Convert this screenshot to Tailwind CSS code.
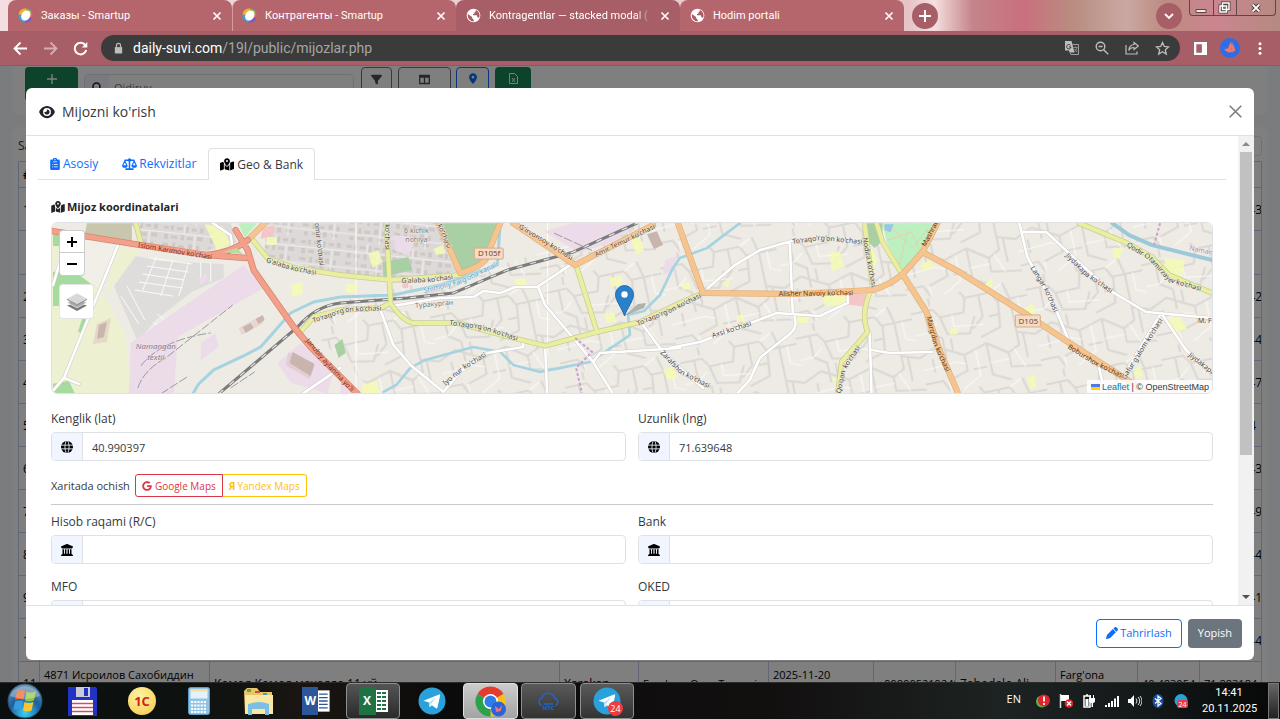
<!DOCTYPE html>
<html lang="uz">
<head>
<meta charset="utf-8">
<meta name="viewport" content="width=device-width, initial-scale=1">
<title>Mijozlar</title>
<script src="https://cdn.jsdelivr.net/npm/@tailwindcss/browser@4"></script>
</head>
<body class="h-screen flex flex-col overflow-hidden bg-black font-['Open_Sans','Noto_Sans',sans-serif] text-[12px] leading-5 text-[#343a40]">

<!-- shared symbols -->
<svg class="hidden" aria-hidden="true">
  <symbol id="eye" viewBox="0 0 576 512"><path d="M288 32c-80.8 0-145.5 36.8-192.6 80.6C48.6 156 17.3 208 2.5 243.7c-3.3 7.9-3.3 16.7 0 24.6C17.3 304 48.6 356 95.4 399.4C142.5 443.2 207.2 480 288 480s145.5-36.8 192.6-80.6c46.8-43.5 78.1-95.4 93-131.1c3.3-7.9 3.3-16.7 0-24.6c-14.9-35.7-46.2-87.7-93-131.1C433.5 68.8 368.8 32 288 32zM144 256a144 144 0 1 1 288 0 144 144 0 1 1 -288 0zm144-64c0 35.3-28.7 64-64 64c-7.1 0-13.9-1.2-20.3-3.3c-5.5-1.8-11.9 1.6-11.7 7.4c.3 6.9 1.3 13.8 3.2 20.7c13.7 51.2 66.4 81.6 117.6 67.9s81.6-66.4 67.9-117.6c-11.1-41.5-47.8-69.4-88.6-71.1c-5.8-.2-9.2 6.1-7.4 11.7c2.1 6.4 3.3 13.2 3.3 20.3z"/></symbol>
  <symbol id="mapdot" viewBox="0 0 576 512"><path d="M408 120c0 54.6-73.1 151.9-105.2 192c-7.7 9.6-22 9.6-29.6 0C241.1 271.9 168 174.6 168 120C168 53.7 221.7 0 288 0s120 53.7 120 120zm8 80.4c3.5-6.9 6.7-13.8 9.6-20.6c.5-1.2 1-2.5 1.5-3.7l116-46.4C558.9 123.4 576 135 576 152V422.8c0 9.8-6 18.6-15.1 22.3L416 503V200.4zM137.6 138.3c2.4 14.1 7.2 28.3 12.8 41.5c2.9 6.8 6.1 13.7 9.6 20.6V451.8L32.9 502.7C17.1 509 0 497.4 0 480.4V209.6c0-9.8 6-18.6 15.1-22.3l122.6-49zM327.8 332c13.9-17.4 35.7-45.7 56.2-77V504.3L192 449.4V255c20.5 31.3 42.3 59.6 56.2 77c20.5 25.6 59.1 25.6 79.6 0zM288 152a40 40 0 1 0 0-80 40 40 0 1 0 0 80z"/></symbol>
  <symbol id="bank" viewBox="0 0 512 512"><path d="M243.4 2.6l-224 96c-14 6-21.8 21-18.7 35.8S16.8 160 32 160v8c0 13.3 10.7 24 24 24H456c13.3 0 24-10.7 24-24v-8c15.2 0 28.3-10.7 31.3-25.6s-4.8-29.9-18.7-35.8l-224-96c-8-3.4-17.2-3.4-25.2 0zM128 224H64V420.3c-.6 .3-1.2 .7-1.8 1.1l-48 32c-11.7 7.8-17 22.4-12.9 35.9S17.9 512 32 512H480c14.1 0 26.5-9.2 30.6-22.7s-1.1-28.1-12.9-35.9l-48-32c-.6-.4-1.2-.7-1.8-1.1V224H384V416H344V224H280V416H232V224H168V416H128V224z"/></symbol>
  <symbol id="globe" viewBox="0 0 24 24"><circle cx="12" cy="12" r="12"/><g fill="none" stroke="#f1f5ff" stroke-width="1.7"><path d="M0 8.3h24M0 15.7h24"/><path d="M12 -2C6.5 4 6.5 20 12 26M12 -2C17.500 4 17.500 20 12 26"/></g></symbol>
  <symbol id="pen" viewBox="0 0 512 512"><path d="M362.7 19.3L314.3 67.7 444.3 197.7l48.400-48.400c25-25 25-65.5 0-90.500L453.3 19.3c-25-25-65.5-25-90.500 0zm-71 71L58.600 323.500c-10.400 10.400-18 23.300-22.200 37.400L1 481.200C-1.500 489.700 .8 498.800 7 505s15.300 8.500 23.700 6.100l120.300-35.400c14.100-4.200 27-11.800 37.400-22.200L421.700 220.300 291.700 90.300z"/></symbol>
  <symbol id="filter" viewBox="0 0 512 512"><path d="M3.900 54.900C10.500 40.900 24.500 32 40 32H472c15.500 0 29.500 8.900 36.100 22.900s4.600 30.500-5.200 42.500L320 320.900V448c0 12.100-6.800 23.200-17.700 28.600s-23.800 4.300-33.500-3l-64-48c-8.100-6-12.800-15.500-12.800-25.600V320.900L9 97.300C-.7 85.400-2.800 68.800 3.900 54.900z"/></symbol>
  <symbol id="pin" viewBox="0 0 384 512"><path d="M215.700 499.200C267 435 384 279.400 384 192C384 86 298 0 192 0S0 86 0 192c0 87.400 117 243 168.300 307.200c12.300 15.300 35.100 15.300 47.400 0zM192 128a64 64 0 1 1 0 128 64 64 0 1 1 0-128z"/></symbol>
  <symbol id="google" viewBox="0 0 488 512"><path d="M488 261.800C488 403.300 391.100 504 248 504 110.800 504 0 393.200 0 256S110.800 8 248 8c66.800 0 123 24.500 166.300 64.900l-67.500 64.900C258.500 52.600 94.300 116.600 94.300 256c0 86.500 69.100 156.600 153.700 156.600 98.200 0 135-70.400 140.800-106.900H248v-85.300h236.100c2.300 12.700 3.900 24.900 3.900 41.400z"/></symbol>
  <symbol id="clipboard" viewBox="0 0 24 30"><path fill-rule="evenodd" d="M3 4h4a5 5 0 0 1 10 0h4a3 3 0 0 1 3 3v20a3 3 0 0 1-3 3H3a3 3 0 0 1-3-3V7a3 3 0 0 1 3-3zM12 2.500a1.700 1.700 0 1 0 0 3.400 1.700 1.700 0 0 0 0-3.400zM7 9v1.500h10V9zM5 15v2h2v-2zM9 15v2h10v-2zM5 21v2h2v-2zM9 21v2h10v-2z"/></symbol>
  <symbol id="scale" viewBox="0 0 40 32"><path d="M18 3h4v25h-4zM7 4h26v4H7zM9 27.500h22V32H9z"/><circle cx="20" cy="5" r="4.500"/><path d="M0 19h15a7.500 7 0 0 1-15 0zM25 19h15a7.500 7 0 0 1-15 0z"/><path fill="none" stroke="currentColor" stroke-width="3" d="M1.800 20 7.500 8l5.700 12M26.800 20l5.700-12 5.700 12"/></symbol>
  <symbol id="smartup" viewBox="0 0 16 16"><path fill="#f0b429" d="M.5 7A7.500 7.500 0 0 1 9 .5L8 8z"/><path fill="#7fb84c" d="M9 .5a7.500 7.500 0 0 1 6 4.500L8 8z"/><path fill="#dd6a4c" d="M15 5a7.500 7.500 0 0 1 0 5.500L8 8z"/><path fill="#7a5bc4" d="M15 10.500a7.500 7.500 0 0 1-8 5L8 8z"/><path fill="#3aa0e0" d="M7.500 15.500A7.500 7.500 0 0 1 .5 7L8 8z"/><ellipse cx="8.300" cy="7.800" rx="4.600" ry="5.800" transform="rotate(35 8 8)" fill="#fff"/></symbol>
  <symbol id="earth" viewBox="0 0 16 16"><circle cx="8" cy="8" r="7.300" fill="#fff"/><path fill="#a85e66" d="M2 6.500 6.500 9.500v1.500l1.800 1.500v1.800A6.500 6.500 0 0 1 2 6.500zM9.500 1.800A6.500 6.500 0 0 1 14 10.500l-1.600-.5-.9-2.300H7.500V6.300l1.700-.6V4.200l1.600-1z"/></symbol>
  <symbol id="x" viewBox="0 0 10 10"><path d="M1.500 1.500l7 7M8.500 1.500l-7 7" fill="none" stroke="currentColor" stroke-width="1.600"/></symbol>
  <symbol id="telegram" viewBox="0 0 28 28"><circle cx="14" cy="14" r="13.500" fill="#2aa1da"/><path fill="#fff" d="M5.500 13.800 21 7.600c.8-.3 1.300.2 1.100 1.100L19.500 20.600c-.2.800-.9 1-1.500.6l-4.200-3-2.200 2.100-.7-4.700z"/><path fill="#b7dff2" d="M10.900 15.500 18.500 10l-5.700 7-1.200 3.300z"/></symbol>
</svg>

<!-- browser tabs -->
<div class="h-[31px] shrink-0 flex font-['Roboto','Noto_Sans',sans-serif] text-[11px] text-white bg-[linear-gradient(90deg,#f3dfe2_0%,#e6c3c7_71%,#f6dfe0_73%,#c4838a_76%,#c9707d_80%,#b98e80_84%,#c9a8a3_88%,#bd8b80_91%,#cb8590_95%,#b58a80_100%)]">
  <div class="w-2 shrink-0"></div>
  <div class="w-56 flex items-center gap-2 pl-[10px] pr-[10px] rounded-t-lg bg-[#b5666d]"><svg class="size-[15px] shrink-0"><use href="#smartup"/></svg><span class="flex-1 whitespace-nowrap overflow-hidden">Заказы - Smartup</span><button aria-label="Yopish"><svg class="size-[10px]"><use href="#x"/></svg></button></div>
  <div class="w-56 flex items-center gap-2 pl-[9px] pr-[10px] rounded-t-lg border-l border-[#d29ca1] bg-[#b5666d]"><svg class="size-[15px] shrink-0"><use href="#smartup"/></svg><span class="flex-1 whitespace-nowrap overflow-hidden">Контрагенты - Smartup</span><button aria-label="Yopish"><svg class="size-[10px]"><use href="#x"/></svg></button></div>
  <div class="w-56 flex items-center gap-2 pl-[10px] pr-[10px] rounded-t-lg bg-[#a85e66]"><svg class="size-[15px] shrink-0"><use href="#earth"/></svg><span class="flex-1 whitespace-nowrap overflow-hidden [mask-image:linear-gradient(90deg,#000_90%,transparent)]">Kontragentlar — stacked modal (</span><button aria-label="Yopish"><svg class="size-[10px]"><use href="#x"/></svg></button></div>
  <div class="w-56 flex items-center gap-2 pl-[10px] pr-[10px] rounded-t-lg bg-[#b5666d]"><svg class="size-[15px] shrink-0"><use href="#earth"/></svg><span class="flex-1 whitespace-nowrap overflow-hidden">Hodim portali</span><button aria-label="Yopish"><svg class="size-[10px]"><use href="#x"/></svg></button></div>
  <button aria-label="Yangi varaq" class="ml-2 mt-[3px] size-[26px] rounded-full bg-[#a85e66] grid place-items-center"><svg class="size-3" viewBox="0 0 12 12"><path d="M6 0v12M0 6h12" stroke="#fff" stroke-width="2"/></svg></button>
  <div class="flex-1"></div>
  <button aria-label="Varaqlar" class="mt-[3px] size-[26px] rounded-full bg-[#a85e66] grid place-items-center"><svg class="size-3" viewBox="0 0 12 12"><path d="M2 4l4 4 4-4" fill="none" stroke="#fff" stroke-width="1.800"/></svg></button>
  <div class="ml-[7px] mr-1 h-4 w-[87px] flex rounded-b border border-t-0 border-[#5d4743] text-white">
    <button aria-label="Kichraytirish" class="flex-1 grid place-items-center border-r border-[#5d4743]"><svg class="size-[12px]" viewBox="0 0 12 12"><path d="M1 7.500h10v3H1z" fill="#f4e9e5" stroke="#5d4743"/></svg></button>
    <button aria-label="Tiklash" class="flex-1 grid place-items-center border-r border-[#5d4743]"><svg class="size-[13px]" viewBox="0 0 13 13"><g fill="none" stroke="#4d3c39" stroke-width="3"><path d="M4.500 2h6.500v6.500H4.500zM2 5h6.500v6H2z"/></g><g fill="none" stroke="#fff" stroke-width="1.500"><path d="M4.500 2h6.500v6.500H4.500zM2 5h6.500v6H2z"/></g></svg></button>
    <button aria-label="Oynani yopish" class="w-[38px] grid place-items-center"><svg class="size-[10px]" viewBox="0 0 12 12"><path d="M2 2l8 8M10 2l-8 8" stroke="#4d3c39" stroke-width="4.500"/><path d="M2 2l8 8M10 2l-8 8" stroke="#fff" stroke-width="2.400"/></svg></button>
  </div>
</div>

<!-- address bar -->
<div class="h-[35px] shrink-0 flex items-center bg-[#a85e66] text-white border-b border-[#8b5a60]">
  <button aria-label="Orqaga" class="ml-[13px]"><svg class="size-[15px]" viewBox="0 0 15 15"><path d="M14 7.500H2M7.500 1.500l-6 6 6 6" fill="none" stroke="#fff" stroke-width="1.800"/></svg></button>
  <button aria-label="Oldinga" class="ml-[15px] opacity-50"><svg class="size-[15px]" viewBox="0 0 15 15"><path d="M1 7.500h12M7.500 1.500l6 6-6 6" fill="none" stroke="#fff" stroke-width="1.800"/></svg></button>
  <button aria-label="Yangilash" class="ml-[15px]"><svg class="size-[15px]" viewBox="0 0 15 15"><path d="M12.300 4.200A5.800 5.800 0 1 0 13.200 9" fill="none" stroke="#fff" stroke-width="2"/><path d="M14.300 1v5.500H8.800z" fill="#fff"/></svg></button>
  <div class="ml-[13px] h-[26px] flex-1 flex items-center rounded-full bg-[#3b3b3b] pl-3 pr-[10px]">
    <svg class="w-[11px] h-3" viewBox="0 0 12 12"><path d="M2 5h8v7H2z" fill="#bdbdbd"/><path d="M3.800 5V3.200a2.200 2.200 0 0 1 4.400 0V5" fill="none" stroke="#bdbdbd" stroke-width="1.300"/></svg>
    <div class="ml-[9px] flex-1 font-['Roboto',sans-serif] text-[14px] text-[#a6a6a6]"><span class="text-white">daily-suvi.com</span>/19l/public/mijozlar.php</div>
    <div class="flex items-center gap-[16px] text-[#bdbdbd]">
      <svg class="size-[14px]" viewBox="0 0 14 14"><path fill="#bdbdbd" d="M0 0h6.500l1 3.500 2 8H4.500l-.5-2H0z"/><path fill="none" stroke="#a0a0a0" d="M7.500 3.500h6v10H6l-1-2"/><path d="M5.500 4.300A2.200 2.200 0 1 0 6 6H4" fill="none" stroke="#3b3b3b"/><path d="M8.500 6.500h4M10.700 5.500v1M12 6.500c-.5 2-1.500 3-2.500 4M9.800 8l2.500 3.200" fill="none" stroke="#a0a0a0" stroke-width=".8"/></svg>
      <svg class="size-[14px]" viewBox="0 0 14 14" fill="none" stroke="currentColor" stroke-width="1.400"><circle cx="5.500" cy="5.500" r="4.300"/><path d="M8.700 8.700l4.500 4.500M3.500 5.500h4"/></svg>
      <svg class="size-[14px]" viewBox="0 0 14 14" fill="none" stroke="currentColor" stroke-width="1.200"><path d="M1 4v9h11v-2.500M9 1.500 13.300 5 9 8.500v-2C6.500 6.500 4.800 7.300 3.800 9.500 4 6 6 4 9 3.500z"/></svg>
      <svg class="size-[15px]" viewBox="0 0 15 15" fill="none" stroke="currentColor" stroke-width="1.300"><path d="M7.500 1.500l1.800 4 4.300.4-3.300 2.900 1 4.300-3.800-2.300-3.800 2.300 1-4.300L1.400 5.900l4.300-.4z"/></svg>
    </div>
  </div>
  <svg class="ml-[14px] size-[13px]" viewBox="0 0 14 14"><path fill="#fff" fill-rule="evenodd" d="M0 0h14v14H0zM2.500 2.500v9h6v-9z"/></svg>
  <svg class="ml-[13px] size-5" viewBox="0 0 20 20"><circle cx="10" cy="10" r="10" fill="#2d6ee8"/><path d="M11 3.500 13 11 8 9.500zM12.500 4 15.500 12.500 12 14zM4 11.500 10 9.500l4 4.500-6 .5z" fill="#f3756a"/></svg>
  <svg class="ml-[18px] mr-[18px] w-1 h-[13px]" viewBox="0 0 4 13" fill="#fff"><circle cx="2" cy="1.700" r="1.500"/><circle cx="2" cy="6.500" r="1.500"/><circle cx="2" cy="11.300" r="1.500"/></svg>
</div>

<!-- page -->
<div class="relative flex-1 min-h-0 overflow-hidden bg-[#f6f8fd]">
  <div class="mx-3 h-[49px] rounded-b-lg bg-white px-[13px] pt-px flex items-start">
    <button class="h-[34px] w-[53px] flex justify-center pt-[7px] rounded bg-[#198754] text-white"><svg class="size-[10px]" viewBox="0 0 10 10"><path d="M5 0v10M0 5h10" stroke="currentColor" stroke-width="1.400"/></svg></button>
    <div class="ml-[6px] mt-[7px] w-[270px] h-7 flex rounded border border-[#dee2e6]">
      <span class="w-6 grid place-items-center bg-[#f1f5ff]"><svg class="size-3" viewBox="0 0 12 12" fill="none" stroke="#212529" stroke-width="1.600"><circle cx="5.500" cy="4.500" r="3.500"/><path d="M8 7l3 3"/></svg></span>
      <input aria-label="Qidiruv" placeholder="Qidiruv" class="min-w-0 flex-1 px-[5px] placeholder:text-[#6c757d] text-[11px]">
    </div>
    <button aria-label="Filtr" class="ml-[7px] h-[34px] w-[31px] flex justify-center pt-[6px] rounded border border-[#6c757d] text-[#4a5157]"><svg class="size-[11px]" fill="currentColor"><use href="#filter"/></svg></button>
    <button aria-label="Ustunlar" class="ml-[6px] h-[34px] w-[53px] flex justify-center pt-[6px] rounded border border-[#6c757d] text-[#4a5157]"><svg class="size-[11px]" viewBox="0 0 11 11" fill="none" stroke="currentColor" stroke-width="1.300"><path d="M.7 1.500h9.600v8H.7zM.7 3h9.600M5.500 2v7.500"/></svg></button>
    <button aria-label="Xarita" class="ml-[5px] h-[34px] w-[33px] flex justify-center pt-[5px] rounded border border-[#0d6efd] text-[#0d6efd]"><svg class="w-[8px] h-[11px]" fill="currentColor"><use href="#pin"/></svg></button>
    <button aria-label="Excel" class="ml-[6px] h-[34px] w-9 flex justify-center pt-[6px] rounded bg-[#198754] text-white"><svg class="w-[9px] h-[11px]" viewBox="0 0 9 11" fill="none" stroke="currentColor"><path d="M.5.500h5l3 3v7h-8zM3 5l3 4M6 5 3 9"/></svg></button>
  </div>

  <div class="mx-3 mt-3 h-[700px] rounded-lg bg-white px-[6px] pt-[9px]">
    <div class="flex items-center justify-between h-5"><span>Saralash</span><span class="h-5 w-28 rounded border border-[#dee2e6]"></span></div>
    <table class="mt-[5px] w-full table-fixed border-collapse text-black [&_td]:border [&_th]:border [&_td]:border-[#c3cdf0] [&_th]:border-[#c3cdf0] [&_td]:px-1 [&_td]:pt-[2px] [&_td]:leading-[18px] [&_td]:overflow-hidden [&_td]:whitespace-nowrap [&_td]:last:pr-1">
      <thead><tr class="h-[26px]"><th class="w-[21px] pl-1 text-left">#</th><th class="w-[170px]"></th><th class="w-[350px]"></th><th class="w-[79px]"></th><th class="w-[130px]"></th><th class="w-[105px]"></th><th class="w-[82px]"></th><th class="w-[100px]"></th><th class="w-[82px]"></th><th class="w-[62px]"></th><th></th></tr></thead>
      <tbody class="[&_.num]:text-center">
        <tr class="h-[43px]"><td>1</td><td colspan="9"></td><td class="num">71.639643</td></tr>
        <tr class="h-[44px]"><td colspan="11"></td></tr>
        <tr class="h-[43px]"><td>2</td><td colspan="9"></td><td class="num">71.639642</td></tr>
        <tr class="h-[43px]"><td>3</td><td colspan="9"></td><td class="num">71.639644</td></tr>
        <tr class="h-[43px]"><td>4</td><td colspan="9"></td><td class="num">71.639647</td></tr>
        <tr class="h-[43px]"><td>5</td><td colspan="9"></td><td class="num">71.63964</td></tr>
        <tr class="h-[43px]"><td>6</td><td colspan="9"></td><td class="num">71.639643</td></tr>
        <tr class="h-[43px]"><td>7</td><td colspan="9"></td><td class="num">71.639649</td></tr>
        <tr class="h-[43px]"><td>8</td><td colspan="9"></td><td class="num">71.639644</td></tr>
        <tr class="h-[43px]"><td>9</td><td colspan="9"></td><td class="num">71.639641</td></tr>
        <tr class="h-[43px]"><td>10</td><td colspan="9"></td><td class="num">71.639644</td></tr>
        <tr class="h-[43px]"><td>11</td><td class="text-[11px]">4871 Исроилов Сахобиддин<br>&nbsp;</td><td>Комол Комол махалла 11 уй</td><td>Xarakan</td><td class="text-[11px]">Farg'ona Qum Tumani</td><td class="text-[11px]">2025-11-20<br>&nbsp;</td><td class="text-[11px]">+998905219249</td><td>Zahodalo Ali</td><td class="text-[11px]">Farg'ona<br>&nbsp;</td><td class="text-[11px]">40.483054</td><td class="text-[11px]">71.883184</td></tr>
      </tbody>
    </table>
  </div>

  <!-- modal -->
  <div class="absolute inset-0 bg-black/50 px-[26px] py-[22px] flex">
    <section role="dialog" aria-label="Mijozni ko'rish" class="flex-1 min-w-0 flex flex-col rounded-md bg-white overflow-hidden">
      <header class="h-12 shrink-0 flex items-center justify-between pl-[13px] pr-3 border-b border-[#dee2e6]">
        <h1 class="flex items-center gap-[7px] text-[14px]"><svg class="w-4 h-[14px]" fill="#212529"><use href="#eye"/></svg>Mijozni ko'rish</h1>
        <button aria-label="Yopish"><svg class="size-[13px]" viewBox="0 0 13 13"><path d="M.7.700l11.600 11.600M12.300.700.700 12.300" stroke="#7a7a7a" stroke-width="1.500"/></svg></button>
      </header>

      <div class="flex-1 min-h-0 flex">
        <div class="flex-1 min-w-0 overflow-hidden pt-3 px-3">
          <nav class="h-8 flex border-b border-[#dee2e6] text-[#0d6efd]">
            <a href="#asosiy" class="px-3 flex items-center gap-[3px]"><svg class="w-[10px] h-3" fill="currentColor"><use href="#clipboard"/></svg>Asosiy</a>
            <a href="#rekvizitlar" class="px-3 flex items-center gap-[2px]"><svg class="w-[15px] h-3" fill="currentColor"><use href="#scale"/></svg>Rekvizitlar</a>
            <a href="#geo" class="-mb-px px-[11px] flex items-center gap-[3px] rounded-t border border-b-0 border-[#dee2e6] bg-white text-[#343a40]"><svg class="w-[14px] h-[13px]" fill="#000"><use href="#mapdot"/></svg>Geo &amp; Bank</a>
          </nav>

          <div class="px-[13px] pt-[17px]">
            <h2 class="flex items-center gap-[2px] text-[11px] leading-5 font-bold text-[#212529]"><svg class="w-[14px] h-3" fill="#212529"><use href="#mapdot"/></svg>Mijoz koordinatalari</h2>

            <div class="relative mt-[5px] h-[172px] rounded-md border border-[#dee2e6] overflow-hidden">
              <svg class="block size-full" viewBox="51 222 1162 172" preserveAspectRatio="xMidYMid slice" font-family="'Noto Sans',sans-serif" font-size="7">
                <defs>
                  <pattern id="streets" width="118" height="97" patternUnits="userSpaceOnUse" patternTransform="rotate(-12)">
                    <path id="lanes" fill="none" stroke="#dbd8d5" stroke-width="2.200" stroke-linejoin="round" d="M0 12h22l6 9h24l4-14h26l5 10h31M14 12v22l12 8v20M28 21l4 18 22 4 8-16M70 7v22l-12 10M88 17l-3 26-21 6M100 17v34l18 6M0 57l18-8 26 14v16l-20 6M44 63l24-7 20 14 12-6V50M68 56v32l18 9M88 70v14l30 5M0 84h18l6 13M12 60v14M34 44v12M106 54v24M76 30h10M50 79h14M20 0v8M96 0l4 17M56 7 52 0"/>
                    <path fill="none" stroke="#faf9f8" stroke-width="1.100" d="M0 34h14l10-8M40 21v12l30 4M82 7l12-6M108 17v18l10 4M0 70l34-2 10 4M56 60v26l-20 11M94 67l8 20M68 76h20M24 85v12"/>
                  </pattern>
                  <pattern id="blocks" width="46" height="34" patternUnits="userSpaceOnUse" patternTransform="rotate(6)">
                    <path fill="#d0c8c3" d="M2 3h5v3H2zM9 2h3v5H9zM15 3h6v3h-6zM24 2h3v6h-3zM30 3h5v3h-5zM38 2h4v5h-4zM3 11h4v5H3zM10 12h6v3h-6zM20 11h3v5h-3zM26 12h6v3h-6zM36 11h6v4h-6zM2 20h6v3H2zM12 19h3v6h-3zM18 21h6v3h-6zM28 19h4v5h-4zM36 20h3v5h-3zM4 28h4v4H4zM12 28h7v3h-7zM23 27h4v5h-4zM32 28h6v3h-6z"/>
                    <path d="M0 9.500h46M0 26h46M23 0v9M34 10v24" stroke="#eee" stroke-width="1.200"/>
                  </pattern>
                </defs>
                <rect x="51" y="222" width="1162" height="172" fill="#eeebe5"/>
                <path fill="url(#streets)" d="M300 320 345 300 500 265 640 222H1213V394H375z"/>
                <path fill="#dcd9d8" d="M130 223h100l6 20-30 8-65-8zM265 223h172l22 50-60 10-60-8-75-20z"/>
                <path fill="url(#blocks)" d="M130 223h80l8 20-12 8-66-8zM265 223h172l22 50-60 10-60-8-75-20z"/>
                <path fill="none" stroke="#fff" stroke-width="1" d="M355.500 222v172M547.500 222v172"/>
                <!-- land use -->
                <path fill="#eef0d2" d="M51 238 115 246 100 290 125 335 130 394H51zM115 246l25 4-35 45z"/>
                <path fill="#f2efe9" d="M84 240l33 5-20 42-20-14-24-2 8-26z"/>
                <path fill="#a6dba0" d="M52 232h8v14h-8zM52 272l20-2 18 14-4 22H52zM82 316l6-1-6 18-5-1zM52 384l16-3 6 13H52z"/>
                <path fill="#c8c7ad" d="M86 223h45v21l-48-5z"/>
                <path fill="#dfdddc" d="M113 286l22-30 25 5 63 3v14l-32 14-36 28-18 22z"/>
                <path fill="none" stroke="#fafafa" stroke-width="1" d="M150 258l42 6M146 266l42 6M142 274l42 6M138 282l44 6M134 290l38 6M156 256l-14 34M172 260l-12 36M188 262l-10 34M120 296l18 28M126 286l18 34M200 262v22M210 262v20M152 322l22 14M156 314l20 14"/>
                <path fill="#ecdbe8" d="M167 317 243 265 263 288 177 337 173 394H128L130 343zM200 360V343L215 333 218 347zM277 363 300 343 333 370 327 394 290 383zM197 279l9-5v8l-6 2zM572 223h65l-22 18-36 12-35-22zM340 376l20 18h-20zM393 235l22 2-6 18-14-4zM665 260l12-4-4 16-10 3z"/>
                <path fill="#ddb6b6" opacity=".4" d="M238 328l20-11 5 6-22 12zM96 324l14-6-4 24-14 2zM288 352l26 14-5 13-24-14z"/>
                <path fill="#c9b5ae" d="M98 325l8-3-3 15-7 2zM292 352l22 12-4 12-21-13zM242 327l8-4 3 5-8 5zM255 319l7-4 2 5-6 4zM647 234l10-3 6 14-9 4z"/>
                <path fill="#f4fbb4" opacity=".85" d="M204 224l18 2 8 18-14 6zM266 237h10v8h-10zM290 285l12-3v12l-10 3zM368 254l10-4 4 12-10 6zM433 249l10-4 2 8-9 2zM345 285l12-2-2 10-10-1zM630 235l8-4 6 20-8 4zM610 278l12-2v9l-11 2zM604 314l10-2 2 10-9 1zM830 253l10-2 4 16-12 4zM823 296l24-1v10l-22 1zM797 315h11v8h-11zM681 284l8-2 2 7-8 1zM722 283l8-4-2 9zM871 247l7 12-3 8-5-5zM987 282l6-3v8l-8 1zM1025 308l8-4 4 8-8 4zM1028 378l7-4 2 12-6 4zM1113 249l12-2-5 12-6-2zM1166 258l20 2-4 18-10 2-7-10zM1168 320l12-5 8 14-10 4zM1134 370l8-4 2 10-8 2zM663 370l12-4 2 12-9 2zM362 385l14-4 4 13h-18zM951 330l7-3v7l-8 1zM832 378l10-1-4 10zM514 280l10-2 3 6-11 2zM737 316l6-2 2 7-8 1zM920 265l10-5 5 7-10 4z"/>
                <path fill="#f6c5c5" d="M850 294h18l-4 12-14-1zM262 228l12-3-2 10-12 4zM402 283l6-2v7h-6z"/>
                <path fill="#a9cfa5" d="M442 223h56l-11 39-25 11zM382 262l26-5 4 13-29 7zM867 223h16v18l-8 7-8-8zM334 345l8-6 3 14-7 5z"/>
                <path fill="#bdf0c0" d="M883 223h50l-6 22-14 20-10 5-16-28zM238 223h18l-12 15z"/>
                <path fill="none" stroke="#eec9a6" stroke-width=".8" d="M890 226l24 22 14-20M888 240l24-8 10 22M900 264l8-34"/>
                <path fill="#9ac5e6" d="M885 224l9 0-3 8-6-2z"/>
                <!-- water -->
                <g fill="none" stroke="#a5d3df" stroke-linejoin="round" stroke-linecap="round">
                  <path stroke-width="3" d="M192 394 198 384 213 370 245 355 260 347 290 313 313 302 340 297 393 295 440 285 497 265 500 223"/>
                  <path stroke-width="2.600" d="M383 392 396 385 410 368 425 360 473 347 500 352 513 365 540 372 590 362 608 350 630 335 628 315 644 311 660 295 673 268 680 258 707 248 740 223"/>
                  <path stroke-width="4" stroke="#9cc8d8" d="M1113 223 1130 235 1153 245 1213 260"/>
                </g>
                <!-- rail -->
                <g fill="none"><path id="rail" stroke="#7b7b7b" stroke-width="3" d="M218 394 297 327Q315 306 340 303L407 298 453 293 507 270 573 252 637 223"/><path stroke="#e5e5e5" stroke-width="1.200" stroke-dasharray="6 8" d="M218 394 297 327Q315 306 340 303L407 298 453 293 507 270 573 252 637 223"/>
                <path stroke="#9a9a9a" stroke-width="1" stroke-dasharray="9 2" d="M137 388Q143 370 165 358L232 305M140 366Q160 340 210 333M160 394 188 376M230 388 254 372M554 233l48 22"/></g>
                <!-- white roads -->
                <g fill="none" stroke-linejoin="round" stroke-linecap="round">
                  <g stroke="#d0ccc9" stroke-width="3.600"><path d="M708 288 735 265 760 250 792 241M790 242 793 312Q800 326 790 334L760 358 750 380 737 394M670 348 700 342 777 313 820 316 848 303V295M870 332 872 394M873 350 890 353 933 352M380 310 393 345 410 365 443 392 460 372 487 353 523 347V340M392 306 440 298 473 297 483 291 500 293 515 287 537 287 570 265M538 287 545 305 573 338 593 362 613 394M545 347 547 394M593 362 600 353 650 350 680 348M643 325 663 352 680 368 703 388M1020 223 1028 257 1057 310 1070 342M1023 232H1047L1110 290 1147 312 1213 318M1162 313 1123 378M1162 313 1187 350 1213 374M117 245 63 378 51 392M63 378 78 384M232 250 230 235 212 223M59 262 52 285M302 394 340 368M1100 368l6 26"/></g>
                  <g stroke="#fff" stroke-width="2.600"><path d="M708 288 735 265 760 250 792 241M790 242 793 312Q800 326 790 334L760 358 750 380 737 394M670 348 700 342 777 313 820 316 848 303V295M870 332 872 394M873 350 890 353 933 352M380 310 393 345 410 365 443 392 460 372 487 353 523 347V340M392 306 440 298 473 297 483 291 500 293 515 287 537 287 570 265M538 287 545 305 573 338 593 362 613 394M545 347 547 394M593 362 600 353 650 350 680 348M643 325 663 352 680 368 703 388M1020 223 1028 257 1057 310 1070 342M1023 232H1047L1110 290 1147 312 1213 318M1162 313 1123 378M1162 313 1187 350 1213 374M117 245 63 378 51 392M63 378 78 384M232 250 230 235 212 223M59 262 52 285M302 394 340 368M1100 368l6 26"/></g>
                  <!-- secondary -->
                  <g stroke="#c9cd95" stroke-width="5.500"><path d="M252 240 267 258 295 268 340 275 390 280 460 275M386 223 390 300M298 334 313 317 340 310 380 308 390 303Q402 321 413 323H457L513 338 545 346 597 332 640 322 680 303 703 293M577 268 597 332M865 223 873 287Q860 312 868 332L842 362 838 394M877 223 883 242 903 275M1080 223 1128 243 1153 257 1170 275 1213 293M135 223 140 243"/></g>
                  <g stroke="#eaee9f" stroke-width="4"><path d="M252 240 267 258 295 268 340 275 390 280 460 275M386 223 390 300M298 334 313 317 340 310 380 308 390 303Q402 321 413 323H457L513 338 545 346 597 332 640 322 680 303 703 293M577 268 597 332M865 223 873 287Q860 312 868 332L842 362 838 394M877 223 883 242 903 275M1080 223 1128 243 1153 257 1170 275 1213 293M135 223 140 243"/></g>
                  <!-- primary -->
                  <g stroke="#dcae78" stroke-width="6.200"><path d="M438 223 460 273Q478 268 485 260L500 223M513 223 575 265 653 225M678 223 703 293 797 294 873 290Q890 285 903 274L923 252 938 223M903 274 927 312 940 350 958 392M923 252 960 272 1028 315 1070 343 1150 394M247 240 264 223"/></g>
                  <g stroke="#f6c48f" stroke-width="5"><path d="M438 223 460 273Q478 268 485 260L500 223M513 223 575 265 653 225M678 223 703 293 797 294 873 290Q890 285 903 274L923 252 938 223M903 274 927 312 940 350 958 392M923 252 960 272 1028 315 1070 343 1150 394M247 240 264 223"/></g>
                  <!-- trunk -->
                  <path stroke="#d88470" stroke-width="6.500" d="M52 231 90 237 140 245 207 255 245 258M235 230 247 250 253 270 293 327 310 347 357 394M207 255Q232 252 247 240"/>
                  <path stroke="#f2a08a" stroke-width="5" d="M52 231 90 237 140 245 207 255 245 258M235 230 247 250 253 270 293 327 310 347 357 394M207 255Q232 252 247 240"/>
                  <path stroke="none" fill="#b8dca0" d="M222 252l14-4 6 6z"/>
                </g>
                <path stroke="#c7a3cf" stroke-width="2" stroke-dasharray="3 2" fill="none" d="M575 338l17 14-16 16 6 26M1161 223l-6 22"/>
                <!-- street names -->
                <defs>
                  <path id="n1" d="M137 247 172 253 215 260"/><path id="n2" d="M265 262 290 270 316 275"/><path id="n3" d="M401 283 430 282 460 278"/>
                  <path id="n4" d="M424 293 460 284 510 260"/><path id="n5" d="M415 308 470 303"/><path id="n6" d="M449 325 480 329 530 345"/>
                  <path id="n7" d="M313 323 345 312 390 310"/><path id="n8" d="M445 386 465 369 492 353"/><path id="n9" d="M518 228 545 244 580 266"/>
                  <path id="n10" d="M596 257 625 243 660 226"/><path id="n11" d="M638 326 672 312 710 293"/><path id="n12" d="M779 296 860 295"/>
                  <path id="n13" d="M713 338 750 326 770 320"/><path id="n14" d="M793 244 820 240 875 245"/><path id="n15" d="M863 238 873 292"/>
                  <path id="n16" d="M841 394 846 370 864 343"/><path id="n17" d="M927 317 934 345 950 380"/><path id="n18" d="M660 353 680 374 710 389"/>
                  <path id="n19" d="M1031 268 1045 290 1058 320"/><path id="n20" d="M1066 256 1085 275 1120 299"/><path id="n21" d="M1127 246 1150 260 1170 282 1205 292"/>
                  <path id="n22" d="M1068 348 1095 365 1135 384"/><path id="n23" d="M1126 380 1145 350 1168 314"/><path id="n24" d="M1189 356 1225 384"/>
                  <path id="n25" d="M305 341 325 365 360 402"/><path id="n26" d="M385 224v35"/><path id="n27" d="M437 225l14 34"/><path id="n28" d="M926 247 942 216"/><path id="n29" d="M314 223l6 50"/>
                </defs>
                <g fill="#4a4745" stroke="#f4f1ea" stroke-width=".7" paint-order="stroke">
                  <text fill="#7a2a1c" stroke="none"><textPath href="#n1">Islom Karimov ko'chasi</textPath></text>
                  <text><textPath href="#n2">G'alaba ko'chasi</textPath></text><text><textPath href="#n3">G'alaba ko'chasi</textPath></text>
                  <text fill="#4d9fd0"><textPath href="#n4">Shimoliy Farg'ona kanali</textPath></text><text fill="#777"><textPath href="#n5">Туракурган</textPath></text>
                  <text><textPath href="#n6">To'raqo'rg'on ko'chasi</textPath></text><text><textPath href="#n7">To'raqo'rg'on ko'chasi</textPath></text>
                  <text><textPath href="#n8">Iyo nur ko'chasi</textPath></text><text fill="#5d3a15"><textPath href="#n9">G'irvonsoy ko'chasi</textPath></text>
                  <text fill="#5d3a15"><textPath href="#n10">Amir Temur ko'chasi</textPath></text><text><textPath href="#n11">To'raqo'rg'on ko'chasi</textPath></text>
                  <text fill="#5d3a15" stroke="none"><textPath href="#n12">Alisher Navoiy ko'chasi</textPath></text><text><textPath href="#n13">Axsi ko'chasi</textPath></text>
                  <text><textPath href="#n14">To'raqo'rg'on ko'chasi</textPath></text><text><textPath href="#n15">Nodira ko'chasi</textPath></text>
                  <text><textPath href="#n16">Qo'qon ko'chasi</textPath></text><text fill="#5d3a15" stroke="none"><textPath href="#n17">Marg'ilon ko'chasi</textPath></text>
                  <text><textPath href="#n18">Zarafshon ko'chasi</textPath></text><text><textPath href="#n19">Langar ko'chasi</textPath></text>
                  <text><textPath href="#n20">Jiydakapa ko'chasi</textPath></text><text><textPath href="#n21">Qodir Otamirzayev ko'chasi</textPath></text>
                  <text fill="#5d3a15" stroke="none"><textPath href="#n22">Boburshox ko'chasi</textPath></text><text><textPath href="#n23">Gafur g'ulom ko'chasi</textPath></text>
                  <text><textPath href="#n24">Jiydakapa</textPath></text><text fill="#7a2a1c" stroke="none"><textPath href="#n25">Janubiy aylanma yo'li</textPath></text>
                  <text><textPath href="#n26">ko'chasi</textPath></text><text><textPath href="#n27">ko'chasi</textPath></text><text fill="#5d3a15" stroke="none"><textPath href="#n28">Mashrab</textPath></text><text><textPath href="#n29">omir ko'chasi</textPath></text>
                  <text x="1199" y="323">M. Fayz</text><text x="1190" y="250" fill="#a98fc0" transform="rotate(12 1190 250)">Namangan</text>
                  <text x="416" y="233" text-anchor="middle" fill="#777">6 kichik</text><text x="416" y="242" text-anchor="middle" fill="#777">nohiya</text>
                  <text x="155" y="349" text-anchor="middle" font-style="italic" font-size="8" fill="#85708c">Namangan</text><text x="155" y="360" text-anchor="middle" font-style="italic" font-size="8" fill="#85708c">textil</text>
                </g>
                <g font-size="8" text-anchor="middle" fill="#6b4a38"><rect x="474" y="248" width="29" height="11" rx="1" fill="#f6dcc6" stroke="#d8ab85"/><text x="489" y="256">D105f</text><rect x="1016" y="315" width="25" height="12" rx="1" fill="#f6dcc6" stroke="#d8ab85"/><text x="1029" y="324">D105</text></g>
                <!-- marker -->
                <path d="M624 316l14-12 8-1-2 5z" fill="#000" opacity=".25"/>
                <path d="M624.500 316C622 308 615.500 301 615.500 294.500a9 9 0 0 1 18 0C633.500 301 627 308 624.500 316z" fill="#2a81cb" stroke="#1f6aa9"/>
                <circle cx="624.500" cy="294.500" r="3.200" fill="#fff"/>
              </svg>
              <div class="absolute left-[7px] top-[7px] w-[26px] rounded-sm border border-black/20 bg-white text-black">
                <button aria-label="Zoom in" class="w-full h-[22px] border-b border-[#ccc] grid place-items-center"><svg class="size-[10px]" viewBox="0 0 10 10"><path d="M5 0v10M0 5h10" stroke="#000" stroke-width="2"/></svg></button>
                <button aria-label="Zoom out" class="w-full h-[22px] grid place-items-center"><svg class="size-[10px]" viewBox="0 0 10 10"><path d="M0 5h10" stroke="#000" stroke-width="2"/></svg></button>
              </div>
              <button aria-label="Layers" class="absolute left-[7px] top-[61px] size-[35px] rounded border border-black/10 bg-white grid place-items-center"><svg class="w-5 h-5" viewBox="0 0 20 20"><path d="M0 13.500 10 19l10-5.500-10-3z" fill="#777"/><path d="M0 10.500 10 16l10-5.500-10-3z" fill="#aaa" stroke="#fff" stroke-width=".6"/><path d="M0 6.500 10 1l10 5.500L10 12z" fill="#d8d8d8" stroke="#fff" stroke-width=".6"/><path d="M0 6.500v1.500L10 13.500 20 8V6.500L10 12z" fill="#999"/></svg></button>
              <div class="absolute right-0 bottom-0 h-[13px] pl-1 pr-[3px] flex items-center bg-white/80 font-['Liberation_Sans',sans-serif] text-[9px]"><svg class="mr-[2px] w-[9px] h-[6px]" viewBox="0 0 9 6"><path fill="#4c7be1" d="M0 0h9v3H0z"/><path fill="#ffd500" d="M0 3h9v3H0z"/></svg><a href="#leaflet" class="text-[#0078a8]">Leaflet</a><span class="whitespace-pre"> | © OpenStreetMap</span></div>
            </div>

            <div class="mt-[15px] grid grid-cols-2 gap-x-3">
              <div><label for="lat" class="block h-5 mb-[3px]">Kenglik (lat)</label><div class="h-[29px] flex rounded border border-[#dee2e6] overflow-hidden"><span class="w-[31px] grid place-items-center border-r border-[#dee2e6] bg-[#f1f5ff]"><svg class="size-3"><use href="#globe"/></svg></span><input id="lat" value="40.990397" class="min-w-0 flex-1 px-[9px] pt-[2px] text-[11px] outline-none"></div></div>
              <div><label for="lng" class="block h-5 mb-[3px]">Uzunlik (lng)</label><div class="h-[29px] flex rounded border border-[#dee2e6] overflow-hidden"><span class="w-[31px] grid place-items-center border-r border-[#dee2e6] bg-[#f1f5ff]"><svg class="size-3"><use href="#globe"/></svg></span><input id="lng" value="71.639648" class="min-w-0 flex-1 px-[9px] pt-[2px] text-[11px] outline-none"></div></div>
            </div>

            <div class="mt-[13px] h-[23px] flex items-center gap-[5px]">
              <span class="text-[11px]">Xaritada ochish</span>
              <div class="h-[23px] flex text-[10px]">
                <a href="#google" class="px-[6px] flex items-center gap-[3px] rounded-l-[3px] border border-[#dc3545] text-[#dc3545]"><svg class="size-[10px]" fill="currentColor"><use href="#google"/></svg>Google Maps</a>
                <a href="#yandex" class="px-[6px] flex items-center gap-[2px] rounded-r-[3px] border border-l-0 border-[#ffc107] text-[#ffc107]"><b class="leading-none">Я</b>Yandex Maps</a>
              </div>
            </div>
            <hr class="mt-[7px] border-[#c8cacc]">
            <div class="mt-[7px] grid grid-cols-2 gap-x-3 gap-y-[13px]">
              <div><label for="rc" class="block h-5 mb-[3px]">Hisob raqami (R/C)</label><div class="h-[29px] flex rounded border border-[#dee2e6] overflow-hidden"><span class="w-[31px] grid place-items-center border-r border-[#dee2e6] bg-[#f1f5ff]"><svg class="size-3"><use href="#bank"/></svg></span><input id="rc" class="min-w-0 flex-1 px-[9px] outline-none"></div></div>
              <div><label for="bank-name" class="block h-5 mb-[3px]">Bank</label><div class="h-[29px] flex rounded border border-[#dee2e6] overflow-hidden"><span class="w-[31px] grid place-items-center border-r border-[#dee2e6] bg-[#f1f5ff]"><svg class="size-3"><use href="#bank"/></svg></span><input id="bank-name" class="min-w-0 flex-1 px-[9px] outline-none"></div></div>
              <div><label for="mfo" class="block h-5 mb-[3px]">MFO</label><div class="h-[29px] flex rounded border border-[#dee2e6] overflow-hidden"><span class="w-[31px] border-r border-[#dee2e6] bg-[#f1f5ff]"></span><input id="mfo" class="min-w-0 flex-1 px-[9px] outline-none"></div></div>
              <div><label for="oked" class="block h-5 mb-[3px]">OKED</label><div class="h-[29px] flex rounded border border-[#dee2e6] overflow-hidden"><span class="w-[31px] border-r border-[#dee2e6] bg-[#f1f5ff]"></span><input id="oked" class="min-w-0 flex-1 px-[9px] outline-none"></div></div>
            </div>
          </div>
        </div>
        <div class="w-4 shrink-0 flex flex-col items-center bg-[#f1f1f1]" aria-hidden="true">
          <svg class="h-4 w-2 shrink-0" viewBox="0 0 8 16"><path d="M0 10l4-4 4 4z" fill="#8a8a8a"/></svg>
          <div class="w-3 h-[303px] bg-[#c1c1c1]"></div>
          <div class="flex-1"></div>
          <svg class="h-4 w-2 shrink-0" viewBox="0 0 8 16"><path d="M0 6l4 4 4-4z" fill="#505050"/></svg>
        </div>
      </div>

      <footer class="h-[55px] shrink-0 flex items-center justify-end gap-[6px] pr-3 border-t border-[#dee2e6] text-[11px]">
        <button class="h-[29px] px-[9px] flex items-center gap-[2px] rounded border border-[#0d6efd] text-[#0d6efd]"><svg class="size-3" fill="currentColor"><use href="#pen"/></svg>Tahrirlash</button>
        <button class="h-[29px] px-[10px] rounded bg-[#6c757d] text-white">Yopish</button>
      </footer>
    </section>
  </div>
</div>

<!-- taskbar -->
<footer class="h-[37px] shrink-0 flex items-center bg-[linear-gradient(90deg,#0b0e0f,#0d1210_15%,#1a1512_24%,#0b0b0b_35%,#120f0f_60%,#1d2322_78%,#151b1b_88%,#070707)] border-t border-[#2c2c2c] text-white">
  <button aria-label="Start" class="ml-[7px]"><svg class="size-9" viewBox="0 0 36 36"><defs><radialGradient id="orb" cx=".5" cy=".85" r=".9"><stop offset="0" stop-color="#3fd0f5"/><stop offset=".5" stop-color="#1b5f9c"/><stop offset="1" stop-color="#7f9cb5"/></radialGradient></defs><circle cx="18" cy="18" r="17" fill="url(#orb)" stroke="#27506f"/><path fill="#e8602c" d="M10 8q5-2 8 0l-1.500 9q-4-2-8.500 0z"/><path fill="#8dc63f" d="M19.500 8.500q4 2 9.500 0l-2 9q-5 2-9 0z"/><path fill="#3a9be0" d="M8 18.500q4-2 8 0L14.500 27q-4-2-8 0z"/><path fill="#fbc52d" d="M17.500 19q4 2 9 0l-2 8.500q-4 2-8.500 0z"/><path fill="#fff" opacity=".3" d="M3 13a16 15 0 0 1 30 0q-15 6-30 0z"/></svg></button>
  <svg class="ml-[24px] w-[31px] h-[31px]" viewBox="0 0 31 31"><path fill="#2132c4" d="M1 1h28l1 2v27H1z"/><path fill="#c9ccd8" d="M9 1h14v10H9z"/><path fill="#2132c4" d="M17 2h4v8h-4z"/><path fill="#fff" d="M5 14h21v15H5z"/><path stroke="#d05060" stroke-width="1.500" d="M5 17.500h21M5 21.500h21M5 25.500h21"/></svg>
  <div class="ml-[30px] size-7 rounded-full bg-[radial-gradient(circle_at_40%_30%,#fff3a0,#f5c94a)] grid place-items-center text-[13px] font-bold leading-none text-[#d5201c]">1С</div>
  <svg class="ml-[32px] w-[22px] h-7" viewBox="0 0 22 28"><rect x=".5" y=".5" width="21" height="27" rx="2" fill="#8fc4e4" stroke="#5c9cc4"/><path fill="#e4f2fa" d="M2.500 2.500h17v9h-17z"/><path fill="#f3dca6" d="M2.500 2.500h17v2h-17z"/><path d="M3 15h16M3 18.500h16M3 22h16M3 25h16" stroke="#fff" stroke-width="2.200" stroke-dasharray="2.200 1"/></svg>
  <svg class="ml-[33px] w-[31px] h-7" viewBox="0 0 31 28"><path fill="#e9c66a" d="M1 4 4 1h10l3 4h12v22H2z"/><path fill="#5aa84a" d="M4 2h4v3H4z"/><path fill="#d05040" d="M12 4h5v2h-5z"/><path fill="#4a9ad0" d="M20 6h4v2h-4z"/><path fill="#f8e7a5" d="M2 8h28v19H2z"/><path fill="#7dbfe2" d="M5 17q11-4 21 0v11h-4v-6H9v6H5z"/></svg>
  <div class="ml-[28px] flex items-center h-7 w-7"><span class="h-7 w-[17px] grid place-items-center bg-[#2b579a] text-[12px] font-bold">W</span><svg class="w-3 h-[22px]" viewBox="0 0 12 22"><path fill="#fff" d="M0 0h12v22H0z"/><path d="M1 4h9M1 7.500h9M1 11h9M1 14.500h9M1 18h9" stroke="#2b579a" stroke-width="1.300"/></svg></div>
  <div class="ml-4 h-9 w-[54px] flex items-center justify-center rounded-sm border border-[#8f8f8f] bg-[linear-gradient(180deg,#555,#2a2a2a)]"><span class="h-7 w-[17px] grid place-items-center bg-[#1f7244] text-[12px] font-bold">X</span><svg class="w-3 h-[22px]" viewBox="0 0 12 22"><path fill="#fff" d="M0 0h12v22H0z"/><path d="M1 3h4M6 3h4M1 7h4M6 7h4M1 11h4M6 11h4M1 15h4M6 15h4M1 19h4M6 19h4" stroke="#1f7244" stroke-width="2"/></svg></div>
  <svg class="ml-[18px] size-7"><use href="#telegram"/></svg>
  <div class="ml-[17px] h-9 w-[55px] grid place-items-center rounded-sm border border-[#e0e0e0] bg-[linear-gradient(180deg,#ccc,#a3a3a3)]"><svg class="size-[31px]" viewBox="0 0 31 31"><path fill="#e33b2e" d="M15.500 15.500 2.500 8A15 15 0 0 1 28.500 8z"/><path fill="#fbc116" d="M15.500 15.500 28.500 8a15 15 0 0 1-13 22.500z"/><path fill="#2ca24c" d="M15.500 15.500l0 15A15 15 0 0 1 2.500 8z"/><circle cx="15.500" cy="15.500" r="7.500" fill="#fff"/><circle cx="15.500" cy="15.500" r="6" fill="#2f7de8"/><circle cx="23.500" cy="23" r="7.500" fill="#2d62dd"/><path d="M20 20l4 3 3-4-1 6-5 1z" fill="#f3756a"/></svg></div>
  <div class="ml-[3px] h-9 w-[55px] grid place-items-center rounded-sm border border-[#8f8f8f] bg-[linear-gradient(180deg,#5a5a5a,#333)]"><svg class="w-[23px] h-[19px]" viewBox="0 0 23 19"><path d="M4.500 13.500a4 4 0 0 1 .5-7.500A6.500 6.500 0 0 1 17.500 6a4 4 0 0 1 1 7.500M7 12h9" fill="none" stroke="#2563c8" stroke-width="1.400"/><text x="11.500" y="18" font-size="6" font-weight="700" text-anchor="middle" fill="#2563c8">NTC</text></svg></div>
  <div class="relative ml-1 h-9 w-[54px] grid place-items-center rounded-sm border border-[#8f8f8f] bg-[linear-gradient(180deg,#5a5a5a,#333)]"><svg class="size-7"><use href="#telegram"/></svg><span class="absolute right-[10px] bottom-[2px] size-[15px] rounded-full bg-[#ea3d3d] text-[9px] leading-[15px] text-center">24</span></div>
  <div class="flex-1"></div>
  <span class="text-[11px] pb-1">EN</span>
  <div class="ml-[15px] flex items-center gap-[9px]">
    <svg class="size-[14px]" viewBox="0 0 14 14"><circle cx="6" cy="7.500" r="6" fill="#5cb548"/><circle cx="8" cy="6.500" r="6" fill="#e0242b"/><path d="M8 2.500v5M8 9v2" stroke="#fff" stroke-width="1.800"/></svg>
    <svg class="size-[14px]" viewBox="0 0 14 14"><path d="M1.500 0v14" stroke="#ddd" stroke-width="1.500"/><path d="M2 1h8v6H2z" fill="#fff"/><circle cx="10" cy="9.500" r="4.300" fill="#e0242b"/><path d="M8 7.500l4 4M12 7.500l-4 4" stroke="#fff" stroke-width="1.400"/></svg>
    <svg class="size-[14px]" viewBox="0 0 14 14"><path fill="none" stroke="#fff" stroke-width="1.500" d="M2 2h6v11H2zM4 1h2"/><path fill="#fff" d="M3.500 5h3v7h-3zM7 4h6v3q0 2-2 2v4H9.500V9Q7 9 7 7zM8 1h1v3H8zM11 1h1v3h-1z"/></svg>
    <svg class="size-[14px]" viewBox="0 0 14 14" fill="#fff"><path d="M0 11h2v2H0zM3 9h2v4H3zM6 7h2v6H6zM9 4.500h2V13H9zM12 2h2v11h-2z"/></svg>
    <svg class="size-[14px]" viewBox="0 0 14 14"><path fill="#fff" d="M0 5h2.500L6 1v12L2.500 9H0z"/><path fill="none" stroke="#ddd" d="M8 4.500q2 2.500 0 5M10 3q3.500 4 0 8M12 2q4 5 0 10"/></svg>
    <svg class="size-[14px]" viewBox="0 0 14 14"><ellipse cx="7" cy="7" rx="5.500" ry="7" fill="#1b4f9c"/><path d="M4 4.500l6 5L7 12V2l3 2.500-6 5" fill="none" stroke="#fff" stroke-width="1.200"/></svg>
    <svg class="size-[14px]" viewBox="0 0 14 14"><circle cx="7" cy="6.500" r="6.500" fill="#2aa1da"/><rect x="3" y="6" width="11" height="8" rx="2" fill="#ea3d3d"/><text x="8.500" y="13" font-size="7" text-anchor="middle" fill="#fff">24</text></svg>
  </div>
  <div class="ml-[14px] w-[54px] text-center font-['Roboto',sans-serif] text-[11px] leading-4">14:41<br>20.11.2025</div>
  <div class="ml-[12px] mr-[1px] w-[11px] h-9 border border-[#777] bg-[linear-gradient(180deg,#666,#222)]"></div>
</footer>
</body>
</html>
